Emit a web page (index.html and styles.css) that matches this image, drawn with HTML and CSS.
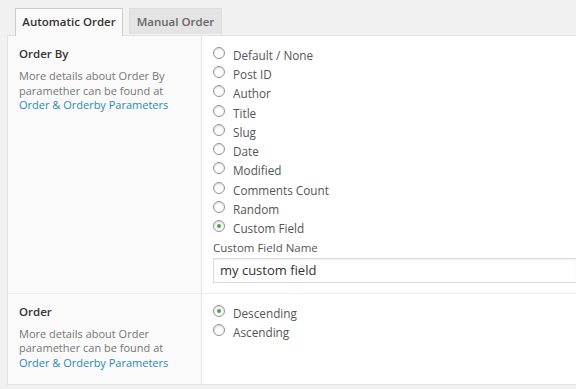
FILE: index.html
```html
<!DOCTYPE html>
<html lang="en">
<head>
    <meta charset="UTF-8">
    <meta name="viewport" content="width=device-width, initial-scale=1.0">
    <title>Order Settings</title>
    <link rel="stylesheet" href="styles.css">
</head>
<body>
    <div class="tabs">
        <span class="tab active">Automatic Order</span>
        <span class="tab">Manual Order</span>
    </div>

    <div class="panel">
        <div class="row">
            <div class="label-cell">
                <h4>Order By</h4>
                <p>More details about Order By paramether can be found at <a href="#">Order &amp; Orderby Parameters</a></p>
            </div>
            <div class="field-cell">
                <label class="radio"><input type="radio" name="orderby"> Default / None</label>
                <label class="radio"><input type="radio" name="orderby"> Post ID</label>
                <label class="radio"><input type="radio" name="orderby"> Author</label>
                <label class="radio"><input type="radio" name="orderby"> Title</label>
                <label class="radio"><input type="radio" name="orderby"> Slug</label>
                <label class="radio"><input type="radio" name="orderby"> Date</label>
                <label class="radio"><input type="radio" name="orderby"> Modified</label>
                <label class="radio"><input type="radio" name="orderby"> Comments Count</label>
                <label class="radio"><input type="radio" name="orderby"> Random</label>
                <label class="radio"><input type="radio" name="orderby" checked> Custom Field</label>
                <div class="field-name">Custom Field Name</div>
                <input type="text" class="text-input" value="my custom field">
            </div>
        </div>
        <div class="row last">
            <div class="label-cell">
                <h4>Order</h4>
                <p>More details about Order paramether can be found at <a href="#">Order &amp; Orderby Parameters</a></p>
            </div>
            <div class="field-cell">
                <label class="radio"><input type="radio" name="order" checked> Descending</label>
                <label class="radio"><input type="radio" name="order"> Ascending</label>
            </div>
        </div>
    </div>
</body>
</html>
```

FILE: styles.css
```css
body {
    margin: 0;
    background: #f1f1f1;
    font-family: "Open Sans", "Liberation Sans", sans-serif;
    color: #555;
    overflow: hidden;
}

.tabs {
    display: flex;
    gap: 6px;
    padding: 8px 0 0 15px;
    height: 27px;
}

.tab {
    display: block;
    box-sizing: border-box;
    width: 93px;
    height: 26px;
    line-height: 26px;
    text-align: center;
    font-size: 11.5px;
    font-weight: 600;
    color: #666;
    background: #e4e4e4;
    border: 1px solid #ddd;
    border-bottom: none;
}

.tab.active {
    width: 108px;
    height: 28px;
    color: #333;
    background: #fafafa;
    border-color: #ccc;
    position: relative;
    z-index: 1;
}

.panel {
    margin-left: 7px;
    border: 1px solid #e2e2e2;
    border-right: none;
    background: #fff;
}

.row {
    display: flex;
    border-bottom: 1px solid #eee;
}

.row.last {
    border-bottom: none;
    min-height: 90px;
}

.label-cell {
    width: 170px;
    flex: none;
    padding: 10px 12px 10px 11px;
    background: #fafafa;
    border-right: 1px solid #e4e4e4;
}

.label-cell h4 {
    margin: 0 0 8px;
    font-size: 11.5px;
    font-weight: 600;
    color: #333;
}

.label-cell p {
    margin: 0;
    font-size: 11px;
    line-height: 14.5px;
    color: #777;
}

.label-cell a {
    color: #2a8ab8;
    text-decoration: none;
}

.field-cell {
    flex: 1;
    min-width: 0;
    padding: 9px 0 10px 11px;
}

.radio {
    display: flex;
    align-items: center;
    height: 19.3px;
    font-size: 11.75px;
    color: #555;
}

.radio input {
    appearance: none;
    -webkit-appearance: none;
    box-sizing: border-box;
    width: 12px;
    height: 12px;
    margin: 0 8px 0 0;
    border: 1px solid #8f959b;
    border-radius: 50%;
    background: #fff;
    box-shadow: inset 0 1px 2px rgba(0, 0, 0, 0.18);
    position: relative;
    top: -2px;
}

.radio input:checked::after {
    content: "";
    position: absolute;
    left: 3px;
    top: 3px;
    width: 4px;
    height: 4px;
    border-radius: 50%;
    background: #3fae3f;
}

.field-name {
    margin-top: 2px;
    font-size: 11.5px;
    color: #555;
}

.text-input {
    display: block;
    box-sizing: border-box;
    width: 100%;
    height: 25px;
    margin-top: 3px;
    padding: 2px 6px;
    border: 1px solid #ddd;
    border-right: none;
    box-shadow: inset 0 1px 2px rgba(0, 0, 0, 0.07);
    font-family: "Open Sans", "Liberation Sans", sans-serif;
    font-size: 13px;
    color: #333;
}
```
